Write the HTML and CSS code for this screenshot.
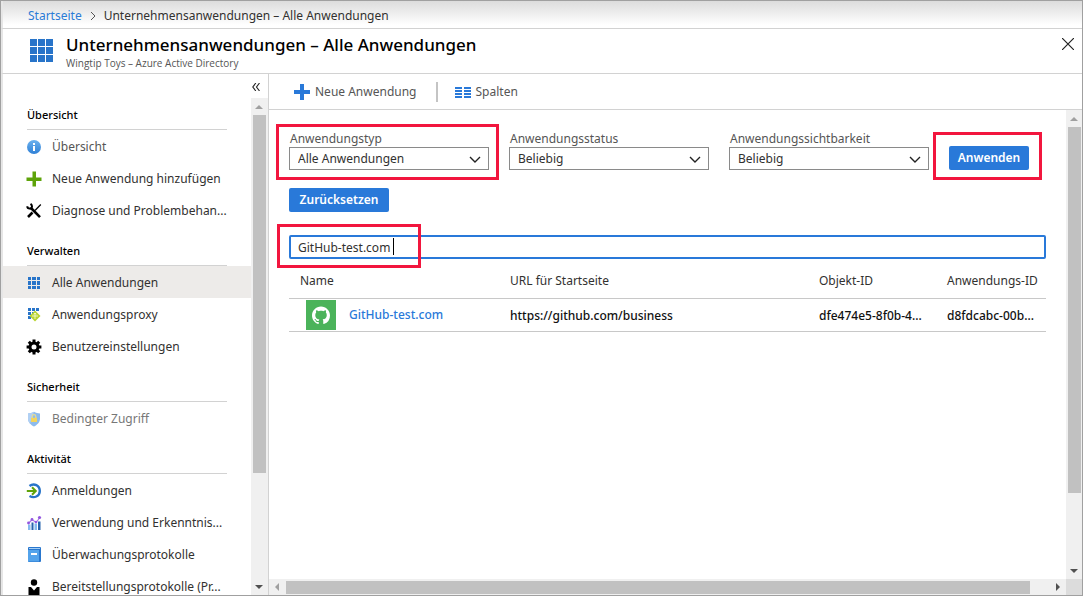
FILE: index.html
```html
<!DOCTYPE html>
<html lang="de">
<head>
<meta charset="utf-8">
<meta name="viewport" content="width=device-width, initial-scale=1">
<title>Unternehmensanwendungen – Alle Anwendungen</title>
<link rel="stylesheet" href="styles.css">
</head>
<body>
<svg class="defs" aria-hidden="true">
  <symbol id="grid" viewBox="0 0 23 23"><path fill="#2874c9" d="M0 0h7v7H0zM8 0h7v7H8zM16 0h7v7h-7zM0 8h7v7H0zM8 8h7v7H8zM16 8h7v7h-7zM0 16h7v7H0zM8 16h7v7H8zM16 16h7v7h-7z"/></symbol>
  <symbol id="grid-small" viewBox="0 0 16 16"><path fill="#2874c9" d="M2 2h3v3H2zM6 2h4v3H6zM11 2h3v3h-3zM2 6h3v4H2zM6 6h4v4H6zM11 6h3v4h-3zM2 11h3v3H2zM6 11h4v3H6zM11 11h3v3h-3z"/></symbol>
  <symbol id="chevron" viewBox="0 0 12 8"><path fill="none" stroke="#222" stroke-width="1.4" d="M1 1l5 5 5-5"/></symbol>
</svg>
<div class="app">
  <nav class="breadcrumb" aria-label="Brotkrumen">
    <a href="#">Startseite</a>
    <svg class="crumb-sep" viewBox="0 0 6 8" aria-hidden="true"><path fill="none" stroke="#555" d="M1 0l4 4-4 4"/></svg>
    <span>Unternehmensanwendungen – Alle Anwendungen</span>
  </nav>
  <header class="header">
    <svg class="header-icon" aria-hidden="true"><use href="#grid"/></svg>
    <div class="header-text">
      <h1>Unternehmensanwendungen – Alle Anwendungen</h1>
      <p>Wingtip Toys – Azure Active Directory</p>
    </div>
    <button class="close" type="button" aria-label="Schließen"><svg viewBox="0 0 12 12"><path fill="none" stroke="#222" stroke-width="1.2" d="M0 0l12 12M12 0L0 12"/></svg></button>
  </header>
  <div class="body">
    <aside class="sidebar">
      <div class="collapse-row"><button class="collapse" type="button" aria-label="Menü einklappen"><svg viewBox="0 0 8 8"><path fill="none" stroke="#222" stroke-width="1.1" d="M3.8 0L.8 4l3 4M7.5 0l-3 4 3 4"/></svg></button></div>
      <div class="scroll-area">
        <nav class="menu">
          <h2>Übersicht</h2>
          <ul>
            <li><a href="#" class="soft"><svg viewBox="0 0 16 16"><defs><linearGradient id="ig" x2="0" y2="1"><stop stop-color="#6cb1ee"/><stop offset="1" stop-color="#2f80d6"/></linearGradient></defs><circle cx="8" cy="8" r="7" fill="url(#ig)"/><path fill="#fff" d="M7 7h2v5H7zM7 4h2v2H7z"/></svg>Übersicht</a></li>
            <li><a href="#"><svg viewBox="0 0 16 16"><path fill="#5ea30a" d="M6.500 .5h3.500v6h5.500V10H10v5.500H6.500V10H.5V6.500h6z"/></svg>Neue Anwendung hinzufügen</a></li>
            <li><a href="#"><svg viewBox="0 0 16 16"><path fill="none" stroke="#000" stroke-width="2.600" d="M4.500 4.500l9.500 9.700M6.500 9.500L2 14"/><path fill="none" stroke="#000" stroke-width="1.300" d="M14.800 1.500L9 7.500"/><path fill="none" stroke="#000" stroke-width="2" d="M4.500.800C7 2.500 6 6 3.600 5.600 2 5.600 1.300 4.500 1.300 3.300"/></svg>Diagnose und Problembehan...</a></li>
          </ul>
          <h2>Verwalten</h2>
          <ul>
            <li><a href="#" class="selected" aria-current="page"><svg><use href="#grid-small"/></svg>Alle Anwendungen</a></li>
            <li><a href="#"><svg viewBox="0 0 16 16"><path fill="#2874c9" d="M2 1h3v3H2zM6 1h3v3H6zM10 1h3v3h-3zM2 5h3v3H2zM6 5h3v3H6zM2 9h3v3H2z"/><path fill="#b8d432" d="M9 3.500l5.500 5.500L9 14.500 3.500 9z"/><path fill="none" stroke="#f3f9d0" stroke-width=".9" d="M9 6v6M6 9h6M7.800 7.300L9 6l1.200 1.300"/></svg>Anwendungsproxy</a></li>
            <li><a href="#"><svg viewBox="0 0 16 16"><circle cx="8" cy="8" r="4" fill="none" stroke="#000" stroke-width="3"/><path fill="none" stroke="#000" stroke-width="3" d="M8 .6v2.900M8 12.500v2.900M.6 8h2.900M12.500 8h2.900M2.800 2.800l2 2M11.200 11.200l2 2M13.200 2.800l-2 2M4.800 11.200l-2 2"/></svg>Benutzereinstellungen</a></li>
          </ul>
          <h2>Sicherheit</h2>
          <ul>
            <li><a href="#" class="disabled"><svg viewBox="0 0 16 16"><path fill="#8dbbed" d="M8 .8C6 2 4 2.500 2 2.500v5C2 11.500 5 14 8 15.500c3-1.500 6-4 6-8v-5c-2 0-4-.5-6-1.700z"/><path fill="#b1d0f3" d="M8 .8C6 2 4 2.500 2 2.500v5c0 2 .8 3.700 2 5z"/><path fill="none" stroke="#e9dc91" stroke-width="1.200" d="M6.200 7V5.500c0-2.400 3.600-2.400 3.600 0V7"/><path fill="#f3d45c" d="M5 6.800h6V11H5z"/></svg>Bedingter Zugriff</a></li>
          </ul>
          <h2>Aktivität</h2>
          <ul>
            <li><a href="#"><svg viewBox="0 0 16 16"><path fill="none" stroke="#2874c9" stroke-width="2.400" d="M3.500 3C8-.5 13.800 2.500 13.800 8S8 15.500 3.500 13"/><path fill="none" stroke="#5ea30a" stroke-width="2" d="M.8 8h9M6 4.200L9.800 8 6 11.800"/></svg>Anmeldungen</a></li>
            <li><a href="#"><svg viewBox="0 0 16 16"><path fill="#85baf0" d="M2 9.500h2.500V15H2zM8.500 8.500H11V15H8.500z"/><path fill="#2764ae" d="M5.500 7.500H7.500V15h-2zM12 6.500h2.500V15H12z"/><path fill="none" stroke="#a779e8" stroke-width="1.200" d="M2.500 8.500l3.500-4 4 3L14 2.500"/><g fill="#9356df"><circle cx="2.500" cy="8" r="1.400"/><circle cx="6" cy="4.500" r="1.400"/><circle cx="10" cy="7" r="1.300"/><circle cx="13.500" cy="2.500" r="1.600"/></g></svg>Verwendung und Erkenntnis...</a></li>
            <li><a href="#"><svg viewBox="0 0 16 16"><rect x="2" y="0" width="13" height="15" rx="1" fill="#2977ce"/><path fill="#a5cff5" d="M3 1h11v1H3z"/><path fill="#53a3eb" d="M2 3h11v11.500H2z"/><path fill="#fff" d="M5 6h6v2H5z"/></svg>Überwachungsprotokolle</a></li>
            <li><a href="#"><svg viewBox="0 0 16 16"><circle cx="8" cy="3.500" r="3.200"/><path d="M2.500 8H5l3 3.500L11 8h2.500v8h-11z"/></svg>Bereitstellungsprotokolle (Pr...</a></li>
          </ul>
        </nav>
        <div class="vbar" aria-hidden="true"><i class="up"></i><i class="thumb"></i><i class="down"></i></div>
      </div>
    </aside>
    <main class="main">
      <div class="toolbar">
        <button type="button"><svg viewBox="0 0 16 16"><path fill="#2979d9" d="M6 0h4v6h6v4h-6v6H6v-6H0V6h6z"/></svg>Neue Anwendung</button>
        <span class="divider"></span>
        <button type="button"><svg viewBox="0 0 16 16"><path fill="#2979d9" d="M0 3h7v2H0zM9 3h7v2H9zM0 6h7v2H0zM9 6h7v2H9zM0 9h7v2H0zM9 9h7v2H9zM0 12h7v2H0zM9 12h7v2H9z"/></svg>Spalten</button>
      </div>
      <div class="panel">
        <div class="content">
          <form class="filters">
            <div class="field mark-type"><label for="type">Anwendungstyp</label>
              <div class="select"><select id="type"><option>Alle Anwendungen</option></select><svg aria-hidden="true"><use href="#chevron"/></svg></div></div>
            <div class="field"><label for="status">Anwendungsstatus</label>
              <div class="select"><select id="status"><option>Beliebig</option></select><svg aria-hidden="true"><use href="#chevron"/></svg></div></div>
            <div class="field"><label for="visibility">Anwendungssichtbarkeit</label>
              <div class="select"><select id="visibility"><option>Beliebig</option></select><svg aria-hidden="true"><use href="#chevron"/></svg></div></div>
            <div class="mark-apply"><button class="primary" type="button">Anwenden</button></div>
          </form>
          <button class="primary reset" type="button">Zurücksetzen</button>
          <div class="search mark-search"><input type="text" aria-label="Anwendungen suchen" value="GitHub-test.com"><span class="caret"></span></div>
          <table>
            <colgroup><col class="c-name"><col><col class="c-object"><col class="c-app"></colgroup>
            <thead><tr><th>Name</th><th>URL für Startseite</th><th>Objekt-ID</th><th>Anwendungs-ID</th></tr></thead>
            <tbody><tr>
              <td><a href="#" class="app-link"><svg viewBox="0 0 30 30" aria-hidden="true"><path fill="#4bb35a" d="M0 0h30v30H0z"/><g transform="translate(6 6.500) scale(1.125)"><path fill="#fff" d="M8 0C3.580 0 0 3.580 0 8c0 3.540 2.290 6.530 5.470 7.590.4.070.55-.17.55-.38 0-.19-.01-.82-.01-1.490-2.010.37-2.530-.49-2.690-.94-.09-.23-.48-.94-.82-1.130-.28-.15-.68-.52-.01-.53.63-.01 1.080.58 1.230.82.72 1.210 1.870.87 2.330.66.07-.52.28-.87.51-1.070-1.780-.2-3.640-.89-3.640-3.950 0-.87.31-1.590.82-2.150-.08-.2-.36-1.020.08-2.120 0 0 .67-.21 2.200.82.64-.18 1.320-.27 2-.27s1.360.09 2 .27c1.530-1.040 2.200-.82 2.200-.82.44 1.100.16 1.920.08 2.120.51.56.82 1.270.82 2.150 0 3.070-1.870 3.750-3.650 3.950.29.25.54.73.54 1.480 0 1.070-.01 1.930-.01 2.200 0 .21.15.46.55.38A8.010 8.010 0 0 0 16 8c0-4.420-3.580-8-8-8z"/></g></svg><span>GitHub-test.com</span></a></td>
              <td>https://github.com/business</td><td>dfe474e5-8f0b-4...</td><td>d8fdcabc-00b...</td>
            </tr></tbody>
          </table>
        </div>
        <div class="vbar" aria-hidden="true"><i class="up"></i><i class="thumb"></i><i class="down"></i></div>
        <div class="hbar" aria-hidden="true"><i class="left"></i><i class="thumb"></i><i class="right"></i></div>
        <div class="corner"></div>
      </div>
    </main>
  </div>
</div>
</body>
</html>
```

FILE: styles.css
```css
*, *::after { box-sizing: border-box; }
body {
  margin: 0;
  font: 12px/20px "Noto Sans", "Open Sans", sans-serif;
  color: #323130;
  background: #fff;
}
button, input, select { font: inherit; color: inherit; margin: 0; }
button { border: 0; padding: 0; background: none; cursor: pointer; }
a { color: inherit; text-decoration: none; }
h1, h2, p, ul { margin: 0; padding: 0; font-weight: 400; }
li { list-style: none; }
svg { display: block; flex: none; }
.defs { position: absolute; width: 0; height: 0; }

.app {
  display: flex;
  flex-direction: column;
  height: 100vh;
  border: 1px solid #a0a0a0;
  overflow: hidden;
}
.breadcrumb {
  display: flex;
  align-items: center;
  gap: 8px;
  flex: none;
  height: 28px;
  padding: 2px 0 0 25px;
  border-bottom: 1px solid #d2d2d2;
  border-left: 2px solid #e6e6e6;
  background: linear-gradient(#dcdcdc, #fff 24px);
}
.breadcrumb a { color: #2b7bd6; }
.crumb-sep { width: 6px; height: 8px; }
.header {
  display: flex;
  flex: none;
  height: 45px;
  padding: 0 8px 0 27px;
  border-bottom: 1px solid #d2d2d2;
  border-left: 2px solid #e6e6e6;
}
.header-icon { width: 23px; height: 23px; margin-top: 10px; }
.header-text { flex: 1; min-width: 0; padding-left: 13px; }
.header h1 { font-size: 17px; line-height: 24px; padding-top: 4px; font-weight: 500; color: #000; white-space: nowrap; }
.header p { font-family: "Open Sans", "Noto Sans", sans-serif; font-size: 10px; line-height: 12px; color: #555; }
.close { align-self: flex-start; margin-top: 9px; padding: 0; }
.close svg { width: 12px; height: 12px; }

.body { display: flex; flex: 1; min-height: 0; }
.sidebar {
  display: flex;
  flex-direction: column;
  flex: none;
  width: 268px;
  border-left: 2px solid #e6e6e6;
  border-right: 1px solid #d2d2d2;
}
.collapse-row { display: flex; justify-content: flex-end; align-items: center; flex: none; height: 24px; padding: 2px 8px 0 0; }
.collapse svg { width: 8px; height: 8px; }
.scroll-area { display: flex; flex: 1; min-height: 0; }
.menu { flex: 1; min-width: 0; overflow: hidden; }
.menu h2 {
  margin: 0 24px;
  padding: 15px 0 4px;
  border-bottom: 1px solid #d2d2d2;
  font-size: 11px;
  font-weight: 500;
  color: #000;
}
.menu h2:first-child { padding-top: 7px; }
.menu a {
  display: flex;
  align-items: center;
  gap: 10px;
  height: 32px;
  padding: 2px 0 0 23px;
  white-space: nowrap;
}
.menu svg { width: 16px; height: 16px; }
.menu .selected { background: #edebe9; }
.menu .soft { color: #555; }
.menu .disabled { color: #777; }

.vbar { display: flex; flex-direction: column; align-items: center; flex: none; width: 16px; background: #f0f0f0; }
.vbar .thumb { width: 13px; background: #c1c1c1; }
.vbar .up { border: 4px solid transparent; border-top: 0; border-bottom-color: #a0a0a0; margin: 7px 0 6px; }
.vbar .down { border: 4px solid transparent; border-bottom: 0; border-top-color: #505050; margin: auto 0 6px; }
.sidebar .vbar { width: 17px; padding-right: 1px; }
.sidebar .thumb { height: 72%; }
.panel .vbar .thumb { height: 78%; }

.main { display: flex; flex-direction: column; flex: 1; min-width: 0; }
.toolbar {
  display: flex;
  align-items: center;
  flex: none;
  height: 36px;
  padding: 1px 0 0 25px;
  border-bottom: 1px solid #d2d2d2;
  color: #555;
}
.toolbar button { display: flex; align-items: center; gap: 5px; }
.toolbar svg { width: 16px; height: 16px; }
.divider { width: 2px; height: 20px; margin: 0 17px 0 19px; background: #c4c4c4; }
.panel {
  display: grid;
  grid-template: minmax(0, 1fr) 16px / minmax(0, 1fr) 16px;
  flex: 1;
  min-height: 0;
}
.content { padding: 21px 20px 0; overflow: hidden; }
.filters { display: flex; align-items: flex-end; gap: 20px; }
.field { flex: 0 1 200px; min-width: 0; position: relative; }
.field label { display: block; line-height: 16px; padding-left: 1px; color: #555; white-space: nowrap; }
.select { position: relative; }
.select select {
  display: block;
  appearance: none;
  width: 100%;
  height: 23px;
  padding: 0 24px 0 8px;
  border: 1px solid #8a8a8a;
  border-radius: 0;
  background: #fff;
}
.select svg { position: absolute; right: 8px; top: 9px; width: 12px; height: 8px; pointer-events: none; }
.primary {
  display: block;
  width: 80px;
  height: 24px;
  border-radius: 2px;
  background: #2979d9;
  color: #fff;
  font-weight: 600;
}
.reset { width: 100px; margin: 18px 0 23px; }
.search { position: relative; }
.search input {
  display: block;
  width: 100%;
  height: 24px;
  padding: 0 7px;
  border: 2px solid #2979d9;
  border-radius: 2px;
  background: #fff;
  outline: none;
}
.caret { position: absolute; left: 104px; top: 3px; width: 1px; height: 17px; background: #000; }

/* Callout frames around the controls used in this step */
.mark-apply { position: relative; }
.mark-type::after, .mark-apply::after, .mark-search::after {
  content: "";
  position: absolute;
  border: 3px solid #f2163e;
  pointer-events: none;
}
.mark-type::after { inset: -7px -10px -10px -13px; }
.mark-apply::after { inset: -14px -13px -10px -16px; }
.mark-search::after { inset: -11px auto -9px -12px; width: 144px; }

table { width: 100%; border-collapse: separate; border-spacing: 0; table-layout: fixed; }
.c-name { width: 210px; }
.c-object { width: 128px; }
.c-app { width: 110px; }
th, td { padding: 0 0 0 11px; border-bottom: 1px solid #c8c8c8; text-align: left; white-space: nowrap; }
th { height: 40px; padding-top: 5px; font-weight: 400; }
td { height: 33px; font-weight: 500; color: #111; }
td + td { padding-top: 2px; }
.app-link { display: flex; align-items: center; gap: 13px; padding-left: 6px; color: #2979d9; }
.app-link svg { width: 30px; height: 30px; }

.hbar { display: flex; align-items: center; background: #f0f0f0; }
.hbar .left { border: 4px solid transparent; border-left: 0; border-right-color: #a0a0a0; margin: 0 7px 0 6px; }
.hbar .thumb { flex: 1; height: 13px; background: #c1c1c1; }
.hbar .right { border: 4px solid transparent; border-right: 0; border-left-color: #505050; margin: 0 6px 0 26px; }
.corner { background: #dcdcdc; }
```
